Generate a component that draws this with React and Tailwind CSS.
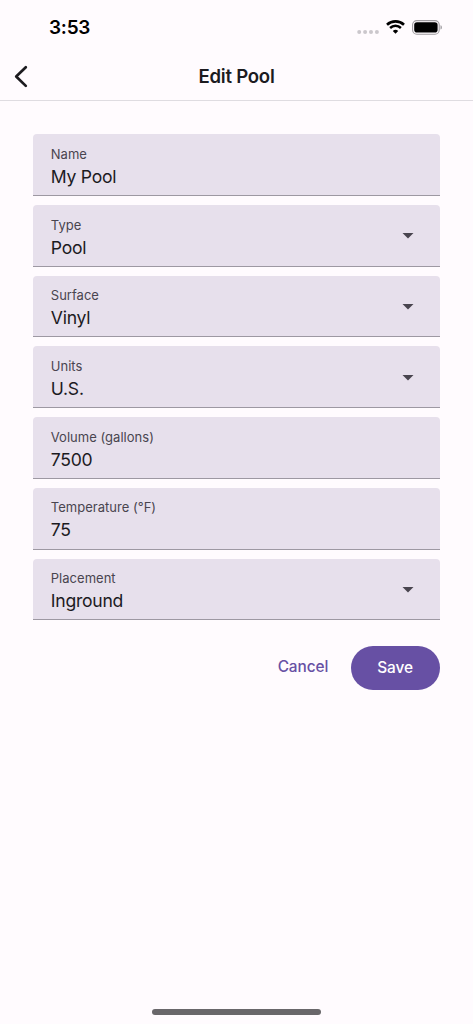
import React from "react";

const fields = [
  { label: "Name", value: "My Pool" },
  { label: "Type", value: "Pool", select: true },
  { label: "Surface", value: "Vinyl", select: true },
  { label: "Units", value: "U.S.", select: true },
  { label: "Volume (gallons)", value: "7500" },
  { label: "Temperature (°F)", value: "75" },
  { label: "Placement", value: "Inground", select: true },
];

const StatusBar = () => (
  <div className="flex h-[54px] items-center justify-between pl-[49px] pr-[31px]">
    <span className="pt-px text-[19px] font-semibold leading-6 tracking-[-0.25px] text-black">3:53</span>
    <div className="flex items-center">
      <svg className="mt-[9px] mr-[6px]" width="23" height="4" viewBox="0 0 23 4" fill="#cbc7cc">
        <circle cx="2.2" cy="2" r="2" />
        <circle cx="8.1" cy="2" r="2" />
        <circle cx="14" cy="2" r="2" />
        <circle cx="19.9" cy="2" r="2" />
      </svg>
      <svg className="mr-[7px]" width="19" height="14" viewBox="0 0 19 14" fill="none" stroke="#000">
        <path d="M1 4.8a12.3 12.3 0 0 1 17 0" strokeWidth="2.6" />
        <path d="M4.1 8a7.8 7.8 0 0 1 10.8 0" strokeWidth="2.5" />
        <path d="M9.5 13.8 6.8 11a3.8 3.8 0 0 1 5.4 0z" fill="#000" stroke="none" />
      </svg>
      <svg width="30" height="15" viewBox="0 0 30 15">
        <rect x="0.6" y="0.6" width="26.6" height="13.6" rx="4.2" fill="none" stroke="#9e9b9f" strokeWidth="1.1" />
        <rect x="2.2" y="2.2" width="23.4" height="10.4" rx="2.8" fill="#000" />
        <path d="M28.5 5.2c1 .4 1.4 1.2 1.4 2.2s-.4 1.8-1.4 2.2z" fill="#9e9b9f" />
      </svg>
    </div>
  </div>
);

const Header = () => (
  <div className="relative flex h-[47px] items-center justify-center border-b border-[#dfdce1]">
    <button className="absolute left-[14px] top-[11px]" aria-label="Back">
      <svg width="14" height="23" viewBox="0 0 14 23" fill="none" stroke="#1c1b1f" strokeWidth="2.7" strokeLinecap="round" strokeLinejoin="round">
        <path d="M11.8 2.2 2.2 11.5l9.6 9.4" />
      </svg>
    </button>
    <h1 className="pb-[2px] text-[18.6px] font-semibold leading-6 tracking-[-0.25px] text-[#1c1b1f]">Edit Pool</h1>
  </div>
);

const Field = ({ label, value, select }) => (
  <div className="flex h-[61.8px] items-center justify-between rounded-t-[4px] border-b border-[#9d98a2] bg-[#e7e0ec] pl-[17.4px] pr-[25.4px]">
    <div className="pt-[4.4px]">
      <div className="text-[13px] leading-[18px] tracking-[0.02px] text-[#49454f]">{label}</div>
      <div className="mt-[2px] text-[17.6px] leading-6 tracking-[-0.25px] text-[#1c1b1f]">{value}</div>
    </div>
    {select && (
      <svg className="mt-[2px]" width="12" height="6" viewBox="0 0 12 6" fill="#49454f">
        <path d="M0.5 0h11L6 5.6z" />
      </svg>
    )}
  </div>
);

function App() {
  return (
    <div className="flex h-screen flex-col overflow-hidden bg-[#fffbfe] font-['Inter',sans-serif]">
      <StatusBar />
      <Header />

      <div className="flex flex-col gap-[8.95px] px-[33.4px] pt-[33.2px]">
        {fields.map((field) => (
          <Field key={field.label} {...field} />
        ))}
      </div>

      <div className="mt-[25.3px] flex items-center justify-end gap-[22.2px] pr-[33.4px]">
        <button className="pb-px text-[15.4px] font-medium leading-[22px] tracking-[-0.05px] text-[#6750a4]">Cancel</button>
        <button className="h-11 w-[89px] rounded-full bg-[#6750a4] pt-px text-[15.4px] font-medium leading-[22px] tracking-[-0.1px] text-white">
          Save
        </button>
      </div>

      <div className="mx-auto mt-auto mb-[9px] h-[6px] w-[169px] rounded-full bg-[#69676a]" />
    </div>
  );
}

export default App;
